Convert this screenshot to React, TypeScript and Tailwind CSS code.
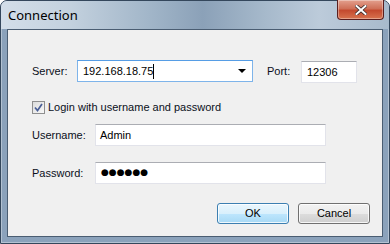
import React from 'react';

const font = { fontFamily: '"Liberation Sans", Arial, sans-serif' };

const TextBox: React.FC<{ className?: string; children?: React.ReactNode }> = ({ className = '', children }) => (
  <div
    className={`h-[22px] flex items-center bg-white border border-[#e2e3ea] border-t-[#abadb3] border-l-[#e2e3ea] text-[11px] text-black ${className}`}
  >
    {children}
  </div>
);

const Button: React.FC<{ label: string; primary?: boolean }> = ({ label, primary }) => (
  <div
    className={`w-[72px] h-[21px] rounded-[3px] border flex items-center justify-center text-[11px] text-black shadow-[inset_0_0_0_1px_rgba(255,255,255,0.8)] ${
      primary
        ? 'border-[#3c7fb1] bg-[linear-gradient(to_bottom,#eaf6fd_0%,#d9f0fc_50%,#bee6fd_51%,#a7d9f5_100%)]'
        : 'border-[#707070] bg-[linear-gradient(to_bottom,#f2f2f2_0%,#ebebeb_50%,#dddddd_51%,#cfcfcf_100%)]'
    }`}
  >
    {label}
  </div>
);

export default function App() {
  return (
    <div className="w-[390px] h-[244px] bg-white" style={font}>
      <div className="w-[390px] h-[244px] rounded-t-[7px] border border-[#34475c] bg-[#8ba2bb] flex flex-col shadow-[inset_0_0_0_1px_rgba(255,255,255,0.35)]">
        {/* title bar */}
        <div className="h-[28px] flex justify-between rounded-t-[6px] bg-[linear-gradient(to_right,#d3dee9_0%,#c3d1de_18%,#a2b6c9_38%,#8ba1b8_52%,#a6b9cb_68%,#bccbda_82%,#a8bacc_100%)]">
          <div className="pl-[7px] pt-[6px] text-[13px] text-black leading-[16px]" style={{ fontFamily: '"Noto Sans", "Liberation Sans", sans-serif' }}>
            Connection
          </div>
          <div className="-mt-px mr-[5px] w-[47px] h-[20px] rounded-b-[4px] border border-[#5a1e1e] border-t-0 bg-[linear-gradient(to_bottom,#e3a08e_0%,#cf7058_45%,#c44a2f_55%,#d8734f_100%)] flex items-center justify-center shadow-[inset_0_0_0_1px_rgba(255,255,255,0.35)]">
            <svg width="12" height="10" viewBox="0 0 12 10">
              <path d="M1.5 1 L10.5 9 M10.5 1 L1.5 9" stroke="#3a2a2a" strokeWidth="3.6" strokeLinecap="square" />
              <path d="M1.5 1 L10.5 9 M10.5 1 L1.5 9" stroke="#ffffff" strokeWidth="2" strokeLinecap="square" />
            </svg>
          </div>
        </div>

        {/* client area */}
        <div className="mx-[6px] h-[208px] border border-[#4a5d72] bg-[#f0f0f0] flex flex-col pt-[30px] text-[11px] text-[#0a0f1a]">
          <div className="flex items-center pl-[24px] h-[22px]">
            <div className="w-[45px]">Server:</div>
            <div className="w-[176px] h-[22px] flex items-center bg-white border border-[#7eb4ea] border-t-[#569de5]">
              <span className="pl-[5px] text-black">192.168.18.75</span>
              <span className="w-px h-[15px] bg-black" />
              <div className="ml-auto mr-[6px] w-0 h-0 border-l-[4px] border-r-[4px] border-t-[4px] border-l-transparent border-r-transparent border-t-black" />
            </div>
            <div className="ml-[14px] w-[34px]">Port:</div>
            <TextBox className="w-[56px] pl-[5px] mt-[2px]">12306</TextBox>
          </div>

          <div className="flex items-center pl-[24px] mt-[17px] h-[16px]">
            <div className="w-[13px] h-[13px] border border-[#8f8f8f] bg-[linear-gradient(to_bottom_right,#dcdcdc,#f8f8f8)] flex items-center justify-center">
              <svg width="9" height="9" viewBox="0 0 9 9">
                <path d="M1 4.5 L3.5 7.5 L8 1" fill="none" stroke="#4a5f97" strokeWidth="1.7" />
              </svg>
            </div>
            <span className="ml-[3px]">Login with username and password</span>
          </div>

          <div className="flex items-center pl-[24px] mt-[9px]">
            <div className="w-[63px]">Username:</div>
            <TextBox className="w-[231px] pl-[4px]">Admin</TextBox>
          </div>

          <div className="flex items-center pl-[24px] mt-[16px]">
            <div className="w-[63px]">Password:</div>
            <TextBox className="w-[231px] pl-[5px]">
              <span className="text-[9px]" style={{ fontFamily: '"DejaVu Sans", sans-serif' }}>
                ●●●●●●
              </span>
            </TextBox>
          </div>

          <div className="flex justify-end gap-[9px] pr-[12px] mt-[19px]">
            <Button label="OK" primary />
            <Button label="Cancel" />
          </div>
        </div>
      </div>
    </div>
  );
}
